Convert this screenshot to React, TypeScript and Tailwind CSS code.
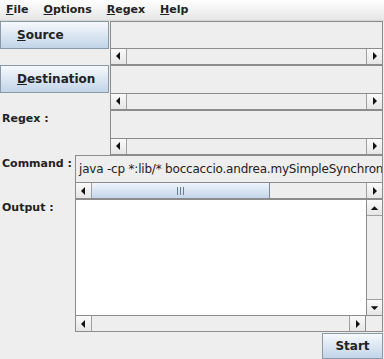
import React from "react";

const font = { fontFamily: '"DejaVu Sans", "Liberation Sans", sans-serif' };

const Arrow = ({ dir }: { dir: "left" | "right" | "up" | "down" }) => {
  const points = {
    left: "6,4 2,8 6,12",
    right: "3,4 7,8 3,12",
    up: "4,6 8,2 12,6",
    down: "4,2 8,6 12,2",
  }[dir];
  const vertical = dir === "up" || dir === "down";
  return (
    <svg width={vertical ? 16 : 9} height={vertical ? 8 : 16} viewBox={vertical ? "0 0 16 8" : "0 0 9 16"}>
      <polygon points={points} fill="#111" />
    </svg>
  );
};

const ArrowButton = ({ dir, className = "" }: { dir: "left" | "right" | "up" | "down"; className?: string }) => (
  <div
    className={`flex items-center justify-center bg-gradient-to-b from-[#fafafa] to-[#e6e6e6] border-[#a0a0a0] ${className}`}
  >
    <Arrow dir={dir} />
  </div>
);

const HScroll = ({ thumb = false }: { thumb?: boolean }) => (
  <div className="flex h-[16px] shrink-0 border-t border-[#8c8c8c] bg-[#eeeeee]">
    <ArrowButton dir="left" className="w-[16px] border-r" />
    <div className="relative flex-1">
      {thumb && (
        <div className="absolute left-0 top-0 bottom-0 w-[178px] flex items-center justify-center border-r border-[#7a8a99] bg-gradient-to-b from-[#eef4fb] to-[#c4d6ea]">
          <div className="flex gap-[2px]">
            <div className="w-[1px] h-[8px] bg-[#6b7c8c]" />
            <div className="w-[1px] h-[8px] bg-[#6b7c8c]" />
            <div className="w-[1px] h-[8px] bg-[#6b7c8c]" />
          </div>
        </div>
      )}
    </div>
    <ArrowButton dir="right" className="w-[16px] border-l" />
  </div>
);

const ScrollField = ({ children, thumb }: { children?: React.ReactNode; thumb?: boolean }) => (
  <div className="flex-1 min-w-0 flex flex-col border border-[#8c8c8c] bg-[#eeeeee]">
    <div className="flex-1 flex items-center overflow-hidden whitespace-nowrap pl-[2px]">{children}</div>
    <HScroll thumb={thumb} />
  </div>
);

const JButton = ({ first, rest }: { first: string; rest: string }) => (
  <div className="w-[109px] h-[28px] shrink-0 flex items-center pl-[16px] border border-[#8a99a6] bg-gradient-to-b from-[#f6f9fc] to-[#c2d4e8] text-[12px] font-bold text-[#222]">
    <span>
      <span className="underline">{first}</span>
      {rest}
    </span>
  </div>
);

const Label = ({ text }: { text: string }) => (
  <div className="text-[11px] font-bold text-[#222] pl-[2px] pt-[1px]">{text}</div>
);

export default function App() {
  return (
    <div className="w-[384px] h-[359px] bg-[#eeeeee] flex flex-col overflow-hidden" style={font}>
      <div className="h-[21px] shrink-0 flex items-center gap-[15px] pl-[6px] text-[11px] font-bold text-[#222] bg-gradient-to-b from-[#ffffff] to-[#e6e6e6] border-b border-[#d6d6d6]">
        <span><span className="underline">F</span>ile</span>
        <span><span className="underline">O</span>ptions</span>
        <span><span className="underline">R</span>egex</span>
        <span><span className="underline">H</span>elp</span>
      </div>

      <div className="flex h-[44px] pr-[1px]">
        <JButton first="S" rest="ource" />
        <div className="w-[1px]" />
        <ScrollField />
      </div>
      <div className="flex h-[45px] pr-[1px]">
        <JButton first="D" rest="estination" />
        <div className="w-[1px]" />
        <ScrollField />
      </div>
      <div className="flex h-[45px] pr-[1px]">
        <div className="w-[110px] shrink-0">
          <Label text="Regex :" />
        </div>
        <ScrollField />
      </div>
      <div className="flex h-[45px] pr-[1px]">
        <div className="w-[75px] shrink-0">
          <Label text="Command :" />
        </div>
        <ScrollField thumb>
          <span className="text-[12px] tracking-[-0.2px] text-[#222] pl-[1px]">java -cp *:lib/* boccaccio.andrea.mySimpleSynchron</span>
        </ScrollField>
      </div>
      <div className="flex h-[133px] pr-[1px]">
        <div className="w-[75px] shrink-0">
          <Label text="Output :" />
        </div>
        <div className="flex-1 flex flex-col border border-[#8c8c8c] bg-[#eeeeee]">
          <div className="flex-1 flex">
            <div className="flex-1 bg-white" />
            <div className="w-[16px] flex flex-col border-l border-[#8c8c8c] bg-[#eeeeee]">
              <ArrowButton dir="up" className="h-[16px] border-b" />
              <div className="flex-1" />
              <ArrowButton dir="down" className="h-[16px] border-t" />
            </div>
          </div>
          <div className="flex">
            <div className="flex-1">
              <HScroll />
            </div>
            <div className="w-[17px] h-[16px] border-t border-l border-[#8c8c8c] bg-[#eeeeee]" />
          </div>
        </div>
      </div>

      <div className="flex justify-end pt-[1px] pr-[1px]">
        <div className="w-[61px] h-[26px] flex items-center justify-center border border-[#8a99a6] bg-gradient-to-b from-[#f6f9fc] to-[#c2d4e8] text-[12px] font-bold text-[#222]">
          Start
        </div>
      </div>
    </div>
  );
}
